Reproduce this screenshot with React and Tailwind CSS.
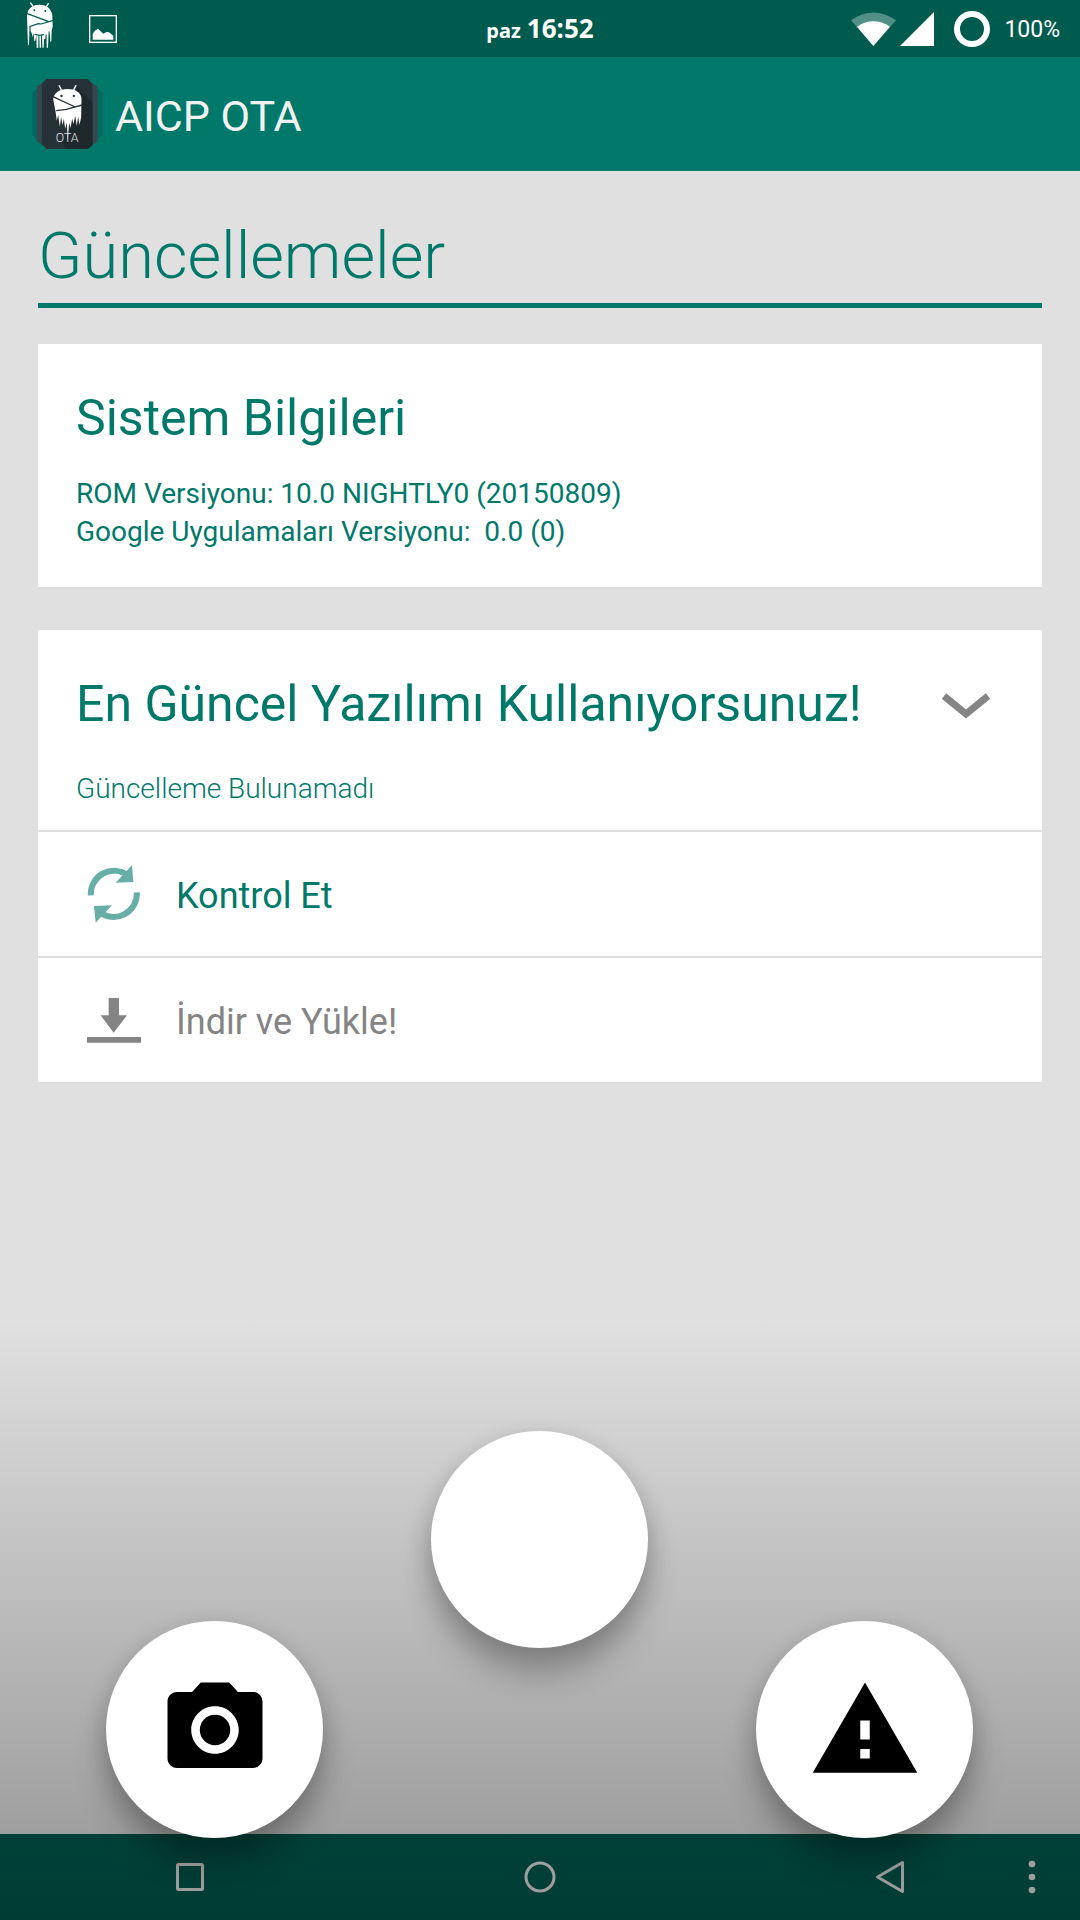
import React from "react";

function DrippingRobotIcon() {
  return (
    <svg viewBox="18 3 84 144" className="h-12 w-7" aria-hidden="true">
      <g fill="none" stroke="#fff" strokeWidth="4" strokeLinecap="round">
        <path d="M32 9l7 10M85 11l-6 9" />
      </g>
      <path
        fill="#fff"
        d="M21 48C22 26 36 14 58 14S94 26 97 46L98 80 95 92 94 124 91 126 89 96 86 92 84 143 80 143 80 104 77 102 76 116 72 118 71 143 67 143 66 104 63 108 63 143 59 143 58 106 55 108 55 143 50 143 49 104 46 122 43 124 41 98 38 112 35 100 32 92 28 100 27 134 24 136 22 80z"
      />
      <g fill="#005b4f">
        <circle cx="43" cy="31" r="3" />
        <circle cx="76" cy="33" r="3" />
      </g>
      <g fill="none" stroke="#005b4f" strokeWidth="3.5">
        <path d="M20 40l66 25M30 100V79l25-8 8 1 37-11M44 103l16 3 12-2" />
      </g>
    </svg>
  );
}

function PictureIcon() {
  return (
    <svg viewBox="0 0 84 84" className="size-7" aria-hidden="true">
      <rect x="2" y="2" width="80" height="80" fill="none" stroke="#fff" strokeWidth="4" />
      <path fill="#fff" d="M11 74V56l8-10 8-5 10 10 6 5 10-5 7 1 9 7 4 3v12z" />
    </svg>
  );
}

function AppIcon() {
  return (
    <svg viewBox="36 234 212 216" className="h-18 w-[71px]" aria-hidden="true">
      <path fill="#00695d" d="M36 278l14-12h184l13 12v128l-13 12H50l-14-12z" />
      <path fill="#37474f" d="M50 258l12-6h158l12 8v164l-10 8H62l-12-8z" />
      <path fill="#263238" d="M65 251l14-14h124l14 14v182l-14 14H79l-14-14z" />
      <path fill="#182024" d="M168 258l49 50v130l-14 9h-62l-18-22 18-24 40-80z" opacity=".55" />
      <path fill="none" stroke="#fff" strokeWidth="4" strokeLinecap="round" d="M117 257l6 12M167 257l-6 12" />
      <path
        fill="#fff"
        d="M99 298C101 278 118 267 142 267s40 10 42 28L183 352 178 375 174 350 170 378 165 348 160 372 156 356 151 384 147 368 144 404 143 428 142 404 140 368 135 386 131 356 127 376 123 350 119 380 114 344 110 362 106 334z"
      />
      <g fill="none" stroke="#263238" strokeWidth="4">
        <path d="M98 290l67 31M108 332l30-4 48-13" />
      </g>
      <circle cx="124" cy="288" r="3.5" fill="#263238" />
      <circle cx="161" cy="288" r="3.5" fill="#263238" />
      <text x="141" y="426" textAnchor="middle" fontSize="37" fontWeight="300" fill="#e4e6e8" className="font-['Roboto',sans-serif]">
        OTA
      </text>
    </svg>
  );
}

function StatusBar() {
  return (
    <header className="grid h-[57px] shrink-0 grid-cols-3 items-center bg-[#005b4f] text-white">
      <div className="flex items-center gap-[35px] pl-[26px]">
        <div className="pb-2">
          <DrippingRobotIcon />
        </div>
        <PictureIcon />
      </div>
      <div className="flex items-baseline justify-center gap-[6px] font-['Noto_Sans',sans-serif] font-bold">
        <span className="text-[20px]">paz</span>
        <span className="text-[26px]">16:52</span>
      </div>
      <div className="flex items-center justify-end pr-5">
        <svg viewBox="0 0 135 102" className="h-[34px] w-[45px]" aria-hidden="true">
          <path fill="#fff" opacity=".32" d="M0 25Q67-22 135 25L67 102z" />
          <path fill="#fff" d="M18 44Q67 12 117 44L67 102z" />
        </svg>
        <svg viewBox="0 0 34 34" className="ml-1 size-[34px]" aria-hidden="true">
          <path fill="#fff" d="M34 0v34H0z" />
        </svg>
        <svg viewBox="0 0 36 36" className="mr-[14px] ml-5 size-9" aria-hidden="true">
          <circle cx="18" cy="18" r="15" fill="none" stroke="#fff" strokeWidth="6" />
        </svg>
        <span className="pt-[2px] text-[23px] leading-[30px]">100%</span>
      </div>
    </header>
  );
}

function RefreshIcon() {
  return (
    <svg viewBox="174 102 162 180" className="h-[60px] w-[54px] shrink-0" aria-hidden="true">
      <g fill="none" stroke="#66aea6" strokeWidth="18">
        <path d="M185.500 196A69.500 69.500 0 0 1 299 138" />
        <path d="M323.500 187A69.500 69.500 0 0 1 210 245" />
      </g>
      <path fill="#66aea6" d="M309 105l4 51-53 2zM200 278l-5-50 54-2z" />
    </svg>
  );
}

function DownloadIcon() {
  return (
    <svg viewBox="171 500 162 141" className="h-[47px] w-[54px] shrink-0" aria-hidden="true">
      <path fill="#848484" d="M236 503h31v52h24l-40 52-39-52h24zM171 620h162v17H171z" />
    </svg>
  );
}

function ActionRow({ icon, children, className = "", disabled }) {
  return (
    <button
      type="button"
      disabled={disabled}
      className={`flex h-[126px] w-full items-center gap-[35px] border-t-2 border-[#dedede] pl-[49px] text-left text-[36px] leading-[44px] ${className}`}
    >
      {icon}
      <span className="pt-1">{children}</span>
    </button>
  );
}

function RoundButton({ label, className = "", children }) {
  return (
    <button
      type="button"
      aria-label={label}
      className={`pointer-events-auto flex size-[217px] items-center justify-center rounded-full bg-white shadow-[0_28px_32px_rgba(0,0,0,0.22),0_6px_24px_rgba(0,0,0,0.16)] ${className}`}
    >
      {children}
    </button>
  );
}

function ShortcutOverlay() {
  return (
    <div className="pointer-events-none absolute inset-x-0 bottom-0 flex h-[600px] items-end justify-between bg-linear-to-b from-black/0 to-black/34 pr-[107px] pb-[82px] pl-[106px]">
      <RoundButton label="Kamera">
        <svg viewBox="0 0 24 24" className="size-[114px]" aria-hidden="true">
          <circle cx="12" cy="12" r="3.2" />
          <path d="M9 2L7.170 4H4c-1.100 0-2 .9-2 2v12c0 1.100.9 2 2 2h16c1.100 0 2-.9 2-2V6c0-1.100-.9-2-2-2h-3.170L15 2H9zm3 15c-2.760 0-5-2.240-5-5s2.240-5 5-5 5 2.240 5 5-2.240 5-5 5z" />
        </svg>
      </RoundButton>
      <RoundButton label="Ana kısayol" className="mb-[190px]" />
      <RoundButton label="Uyarı">
        <svg viewBox="0 0 24 24" className="size-[114px]" aria-hidden="true">
          <path d="M1 21h22L12 2 1 21zm12-3h-2v-2h2v2zm0-4h-2v-4h2v4z" />
        </svg>
      </RoundButton>
    </div>
  );
}

function NavigationBar() {
  return (
    <nav className="relative grid h-[86px] shrink-0 grid-cols-3 bg-[#005b4f] px-[15px] text-[#e8e8e8]">
      <button type="button" aria-label="Son uygulamalar" className="flex items-center justify-center">
        <svg viewBox="0 0 28 28" className="size-7" aria-hidden="true">
          <rect x="1.500" y="1.500" width="25" height="25" rx="1" fill="none" stroke="currentColor" strokeWidth="3" />
        </svg>
      </button>
      <button type="button" aria-label="Ana ekran" className="flex items-center justify-center">
        <svg viewBox="0 0 32 32" className="size-8" aria-hidden="true">
          <circle cx="16" cy="16" r="14" fill="none" stroke="currentColor" strokeWidth="3" />
        </svg>
      </button>
      <button type="button" aria-label="Geri" className="flex items-center justify-center">
        <svg viewBox="0 0 30 34" className="h-[34px] w-[30px]" aria-hidden="true">
          <path d="M27.500 2.500v29L2.500 17z" fill="none" stroke="currentColor" strokeWidth="3" strokeLinejoin="round" />
        </svg>
      </button>
      <button type="button" aria-label="Menü" className="absolute inset-y-0 right-0 flex w-24 items-center justify-center">
        <svg viewBox="0 0 8 34" className="h-[34px] w-2" fill="currentColor" aria-hidden="true">
          <circle cx="4" cy="4" r="3.300" />
          <circle cx="4" cy="17" r="3.300" />
          <circle cx="4" cy="30" r="3.300" />
        </svg>
      </button>
    </nav>
  );
}

export default function App() {
  return (
    <div className="relative flex min-h-screen flex-col bg-[#e0e0e0] font-['Roboto',sans-serif] text-[#00796b]">
      <StatusBar />
      <div className="flex h-[114px] shrink-0 items-center gap-3 bg-[#00796b] pl-8">
        <AppIcon />
        <span className="pt-1 text-[43px] leading-[52px] text-[#f2f2f2]">AICP OTA</span>
      </div>
      <main className="flex-1 px-[38px] pt-[45px]">
        <h1 className="border-b-[5px] border-[#00796b] pb-[7px] text-[65px] leading-[80px] font-light">Güncellemeler</h1>

        <section className="mt-9 bg-white px-[38px] pt-11 pb-9 shadow-[0_2px_3px_rgba(0,0,0,0.02)]">
          <h2 className="text-[50px] leading-[60px]">Sistem Bilgileri</h2>
          <div className="mt-[27px] text-[28px] leading-[38px] whitespace-pre-wrap">
            <p>ROM Versiyonu: 10.0 NIGHTLY0 (20150809)</p>
            <p>{"Google Uygulamaları Versiyonu:  0.0 (0)"}</p>
          </div>
        </section>

        <section className="mt-[43px] bg-white shadow-[0_2px_3px_rgba(0,0,0,0.02)]">
          <div className="px-[38px] pt-11 pb-[22px]">
            <div className="flex items-center justify-between">
              <h2 className="text-[50px] leading-[60px]">En Güncel Yazılımı Kullanıyorsunuz!</h2>
              <button type="button" aria-label="Ayrıntıları göster" className="mr-[14px] pt-1">
                <svg viewBox="0 0 48 26" className="h-[26px] w-12" aria-hidden="true">
                  <path d="M2 3l22 18L46 3" fill="none" stroke="#858585" strokeWidth="7" />
                </svg>
              </button>
            </div>
            <p className="mt-9 text-[28px] leading-[38px] font-light">Güncelleme Bulunamadı</p>
          </div>
          <ActionRow icon={<RefreshIcon />}>Kontrol Et</ActionRow>
          <ActionRow icon={<DownloadIcon />} className="text-[#848484]" disabled>
            İndir ve Yükle!
          </ActionRow>
        </section>
      </main>
      <NavigationBar />
      <ShortcutOverlay />
    </div>
  );
}
